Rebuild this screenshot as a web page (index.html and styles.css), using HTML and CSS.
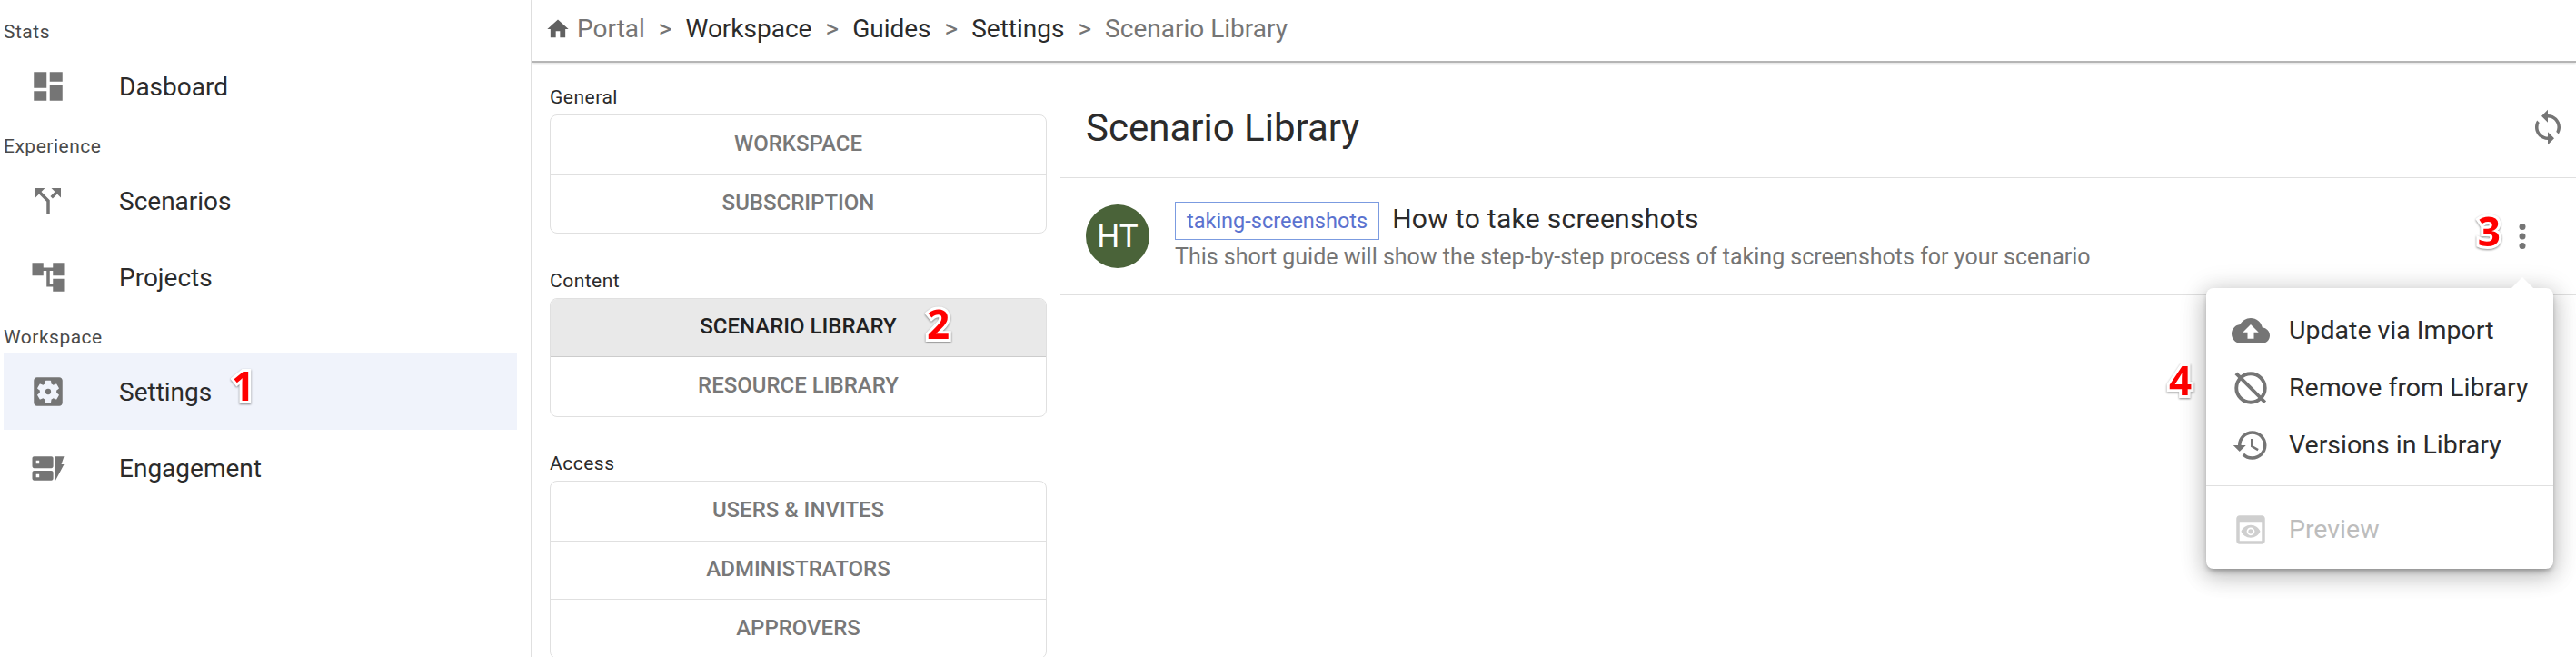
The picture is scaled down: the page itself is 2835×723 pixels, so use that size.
FILE: index.html
```html
<!DOCTYPE html>
<html lang="en">
<head>
    <meta charset="UTF-8">
    <meta name="viewport" content="width=device-width, initial-scale=1.0">
    <title>Scenario Library</title>
    <link rel="stylesheet" href="styles.css">
</head>
<body>
    <div class="app">
        <aside class="sidebar">
            <div class="side-label">Stats</div>
            <a class="side-item">
                <svg class="icon" viewBox="0 0 24 24"><path d="M3 13h8V3H3v10zm0 8h8v-6H3v6zm10 0h8V11h-8v10zm0-18v6h8V3h-8z"/></svg>
                <span>Dasboard</span>
            </a>
            <div class="side-label">Experience</div>
            <a class="side-item">
                <svg class="icon" viewBox="0 0 24 24"><path d="M14 4l2.29 2.29-2.88 2.88 1.42 1.42 2.88-2.88L20 10V4zm-4 0H4v6l2.29-2.29 4.71 4.7V20h2v-8.41l-5.29-5.3z"/></svg>
                <span>Scenarios</span>
            </a>
            <a class="side-item">
                <svg class="icon" viewBox="0 0 24 24"><path d="M22 11V3h-7v3H9V3H2v8h7V8h2v10h4v3h7v-8h-7v3h-2V8h2v3z"/></svg>
                <span>Projects</span>
            </a>
            <div class="side-label">Workspace</div>
            <a class="side-item active">
                <svg class="icon" viewBox="0 0 24 24"><path d="M19 3H5c-1.1 0-2 .9-2 2v14c0 1.1.9 2 2 2h14c1.1 0 2-.9 2-2V5c0-1.1-.9-2-2-2zm-1.75 9c0 .23-.02.46-.05.68l1.48 1.16c.13.11.17.3.08.45l-1.4 2.42c-.09.15-.27.21-.43.15l-1.74-.7c-.36.28-.76.51-1.18.69l-.26 1.85c-.03.17-.18.3-.35.3h-2.8c-.17 0-.32-.13-.35-.3l-.26-1.85c-.43-.18-.82-.41-1.18-.69l-1.74.7c-.16.06-.34 0-.43-.15l-1.4-2.42c-.09-.15-.05-.34.08-.45l1.48-1.16c-.03-.22-.05-.45-.05-.68 0-.23.02-.46.05-.68l-1.48-1.16c-.13-.11-.17-.3-.08-.45l1.4-2.42c.09-.15.27-.21.43-.15l1.74.7c.36-.28.76-.51 1.18-.69l.26-1.85c.03-.17.18-.3.35-.3h2.8c.17 0 .32.13.35.3l.26 1.85c.43.18.82.41 1.18.69l1.74-.7c.16-.06.34 0 .43.15l1.4 2.42c.09.15.05.34-.08.45l-1.48 1.16c.03.22.05.45.05.68z"/><circle cx="12" cy="12" r="1.8"/></svg>
                <span>Settings</span>
                <b class="mark mark-1">1</b>
            </a>
            <a class="side-item">
                <svg class="icon" viewBox="0 0 24 24"><path fill-rule="evenodd" d="M3.2 4.7h10.8c.7 0 1.2.5 1.2 1.2v5c0 .7-.5 1.2-1.2 1.2H3.200c-.7 0-1.200-.5-1.200-1.200v-5c0-.7.5-1.200 1.200-1.200zM4.400 7.300v2h2v-2zM3.200 13.700h10.800c.7 0 1.200.5 1.200 1.200v3.700c0 .7-.5 1.200-1.200 1.200H3.200c-.7 0-1.200-.5-1.200-1.200v-3.700c0-.7.5-1.200 1.200-1.200zM4.400 15.800v2h2v-2z"/><path d="M16.500 4.700H22l-1.700 5H22l-5.500 10.300z"/></svg>
                <span>Engagement</span>
            </a>
        </aside>

        <div class="page">
            <header class="crumbs">
                <svg class="home" viewBox="0 0 24 24"><path d="M10 20v-6h4v6h5v-8h3L12 3 2 12h3v8z"/></svg>
                <span class="crumb-muted">Portal</span>
                <span class="sep">&gt;</span>
                <span>Workspace</span>
                <span class="sep">&gt;</span>
                <span>Guides</span>
                <span class="sep">&gt;</span>
                <span>Settings</span>
                <span class="sep">&gt;</span>
                <span class="crumb-muted">Scenario Library</span>
            </header>

            <div class="page-body">
                <nav class="settings-nav">
                    <div class="nav-group">
                        <div class="nav-label">General</div>
                        <div class="nav-card">
                            <a class="nav-item">WORKSPACE</a>
                            <a class="nav-item">SUBSCRIPTION</a>
                        </div>
                    </div>
                    <div class="nav-group">
                        <div class="nav-label">Content</div>
                        <div class="nav-card">
                            <a class="nav-item selected">SCENARIO LIBRARY<b class="mark mark-2">2</b></a>
                            <a class="nav-item">RESOURCE LIBRARY</a>
                        </div>
                    </div>
                    <div class="nav-group">
                        <div class="nav-label">Access</div>
                        <div class="nav-card">
                            <a class="nav-item">USERS &amp; INVITES</a>
                            <a class="nav-item">ADMINISTRATORS</a>
                            <a class="nav-item">APPROVERS</a>
                        </div>
                    </div>
                </nav>

                <main class="library">
                    <div class="library-head">
                        <h1>Scenario Library</h1>
                        <svg class="icon" viewBox="0 0 24 24"><path d="M12 4V1L8 5l4 4V6c3.310 0 6 2.690 6 6 0 1.010-.25 1.970-.7 2.800l1.460 1.460C19.540 15.030 20 13.570 20 12c0-4.420-3.580-8-8-8zm0 14c-3.310 0-6-2.690-6-6 0-1.010.25-1.970.7-2.800L5.240 7.740C4.460 8.970 4 10.430 4 12c0 4.420 3.580 8 8 8v3l4-4-4-4v3z"/></svg>
                    </div>
                    <div class="guide">
                        <div class="avatar">HT</div>
                        <div class="guide-text">
                            <div class="guide-line">
                                <span class="tag">taking-screenshots</span>
                                <span class="guide-title">How to take screenshots</span>
                            </div>
                            <div class="guide-desc">This short guide will show the step-by-step process of taking screenshots for your scenario</div>
                        </div>
                        <b class="mark mark-3">3</b>
                        <svg class="icon" viewBox="0 0 24 24"><circle cx="12" cy="6" r="2"/><circle cx="12" cy="12" r="2"/><circle cx="12" cy="18" r="2"/></svg>
                    </div>
                </main>
            </div>
        </div>

        <b class="mark mark-4">4</b>

        <div class="menu">
            <a class="menu-item">
                <svg class="icon" viewBox="0 0 24 24"><path d="M19.350 10.040C18.670 6.590 15.640 4 12 4 9.110 4 6.600 5.640 5.350 8.040 2.340 8.360 0 10.910 0 14c0 3.310 2.690 6 6 6h13c2.760 0 5-2.240 5-5 0-2.640-2.050-4.780-4.650-4.960zM14 13v4h-4v-4H7l5-5 5 5h-3z"/></svg>
                <span>Update via Import</span>
            </a>
            <a class="menu-item">
                <svg class="icon" viewBox="0 0 24 24"><circle class="ring" cx="12" cy="12" r="9"/><path class="slash" d="M2.800 2.800L21 21"/></svg>
                <span>Remove from Library</span>
            </a>
            <a class="menu-item">
                <svg class="icon" viewBox="0 0 24 24"><path d="M13 3c-4.970 0-9 4.030-9 9H1l3.890 3.890.07.14L9 12H6c0-3.870 3.130-7 7-7s7 3.130 7 7-3.130 7-7 7c-1.930 0-3.680-.79-4.940-2.060l-1.420 1.420C8.270 19.990 10.510 21 13 21c4.970 0 9-4.030 9-9s-4.030-9-9-9zm-1 5v5l4.280 2.540.72-1.210-3.500-2.080V8H12z"/></svg>
                <span>Versions in Library</span>
            </a>
            <div class="menu-divider"></div>
            <a class="menu-item disabled">
                <svg class="icon" viewBox="0 0 24 24"><path d="M19 3H5c-1.110 0-2 .9-2 2v14c0 1.100.89 2 2 2h14c1.100 0 2-.9 2-2V5c0-1.100-.89-2-2-2zm0 16H5V7h14v12zM12 9c-2.730 0-5.060 1.660-6 4 .94 2.340 3.270 4 6 4s5.060-1.660 6-4c-.94-2.340-3.270-4-6-4zm0 6.500c-1.380 0-2.500-1.120-2.500-2.500s1.120-2.500 2.500-2.500 2.500 1.120 2.500 2.500-1.120 2.500-2.500 2.500z"/><circle cx="12" cy="13" r="1.500"/></svg>
                <span>Preview</span>
            </a>
        </div>
    </div>
</body>
</html>
```

FILE: styles.css
```css
body {
    margin: 0;
    font-family: Roboto, Arial, sans-serif;
    color: #2b2b2b;
    background-color: #fff;
    overflow: hidden;
}

.app {
    position: relative;
    display: flex;
    height: 723px;
    overflow: hidden;
}

.icon {
    flex: none;
    width: 42px;
    height: 42px;
    fill: #757575;
}

/* left sidebar */
.sidebar {
    flex: none;
    box-sizing: border-box;
    width: 586px;
    padding: 11px 15px 0 4px;
    border-right: 2px solid #e0e0e0;
}

.side-label {
    height: 42px;
    padding-top: 12px;
    box-sizing: border-box;
    font-size: 21px;
    letter-spacing: 0.5px;
    line-height: 24px;
    color: #4a4a4a;
}

.side-item {
    position: relative;
    display: flex;
    align-items: center;
    gap: 57px;
    height: 84px;
    padding-left: 28px;
    font-size: 28px;
}

.side-item.active {
    background-color: #f0f3fb;
}

/* red numbers stuck on the screenshot */
.mark {
    position: absolute;
    font-family: "Open Sans", sans-serif;
    font-size: 44px;
    line-height: 44px;
    font-weight: 700;
    color: #f00;
    -webkit-text-stroke: 6px #fff;
    paint-order: stroke fill;
    filter: drop-shadow(0 1px 1px rgba(0, 0, 0, 0.45));
}

.mark-1 { left: 251px; top: 13px; }
.mark-2 { left: 414px; top: 5px; }
.mark-3 { right: 83px; top: 36px; }
.mark-4 { left: 2387px; top: 396px; }

/* breadcrumb + content */
.page {
    flex: 1;
    display: flex;
    flex-direction: column;
    min-width: 0;
}

.crumbs {
    flex: none;
    display: flex;
    align-items: center;
    box-sizing: border-box;
    height: 69px;
    padding: 0 0 4px 14px;
    font-size: 28px;
    border-bottom: 2px solid #b5b5b5;
    box-shadow: 0 1px 2px rgba(0, 0, 0, 0.12);
}

.home {
    width: 28px;
    height: 28px;
    margin-right: 7px;
    fill: #616161;
}

.crumb-muted {
    color: #757575;
}

.sep {
    margin: 0 15px;
    color: #757575;
}

.page-body {
    flex: 1;
    display: flex;
    min-height: 0;
}

.settings-nav {
    flex: none;
    width: 547px;
    margin-left: 19px;
    padding-top: 26px;
}

.nav-group {
    margin-bottom: 39.500px;
}

.nav-label {
    font-size: 21px;
    letter-spacing: 0.5px;
    line-height: 24px;
    margin-bottom: 7px;
}

.nav-card {
    border: 1px solid #e0e0e0;
    border-radius: 8px;
}

.nav-item {
    position: relative;
    display: flex;
    align-items: center;
    justify-content: center;
    box-sizing: border-box;
    height: 64.500px;
    padding-bottom: 2px;
    font-size: 24px;
    font-weight: 500;
    color: #787878;
}

.nav-item + .nav-item {
    border-top: 1px solid #e0e0e0;
}

.nav-item.selected {
    background-color: #e9e9e9;
    color: #212121;
    border-bottom: 1px solid #ccc;
    border-radius: 7px 7px 0 0;
}

.nav-item.selected + .nav-item {
    border-top: 0;
}

/* library list */
.library {
    flex: 1;
    min-width: 0;
    margin-left: 15px;
}

.library-head {
    display: flex;
    align-items: center;
    justify-content: space-between;
    box-sizing: border-box;
    height: 127px;
    padding: 16px 10px 0 28px;
    border-bottom: 1px solid #e0e0e0;
}

h1 {
    margin: 0;
    font-size: 42px;
    font-weight: 400;
}

.guide {
    position: relative;
    display: flex;
    align-items: center;
    box-sizing: border-box;
    height: 129px;
    padding: 0 38px 0 28px;
    border-bottom: 1px solid #e0e0e0;
}

.avatar {
    flex: none;
    display: flex;
    align-items: center;
    justify-content: center;
    width: 70px;
    height: 70px;
    margin-right: 28px;
    border-radius: 50%;
    background-color: #4a6339;
    color: #fff;
    font-size: 35px;
}

.guide-text {
    flex: 1;
    min-width: 0;
    padding-top: 2px;
}

.guide-line {
    display: flex;
    align-items: center;
    gap: 14px;
}

.tag {
    box-sizing: border-box;
    height: 42px;
    padding: 0 12px;
    border: 1px solid #7b9be0;
    color: #5b72cf;
    font-size: 23.500px;
    line-height: 40px;
}

.guide-title {
    font-size: 30px;
    letter-spacing: 0.3px;
    margin-top: -4px;
}

.guide-desc {
    font-size: 25px;
    line-height: 37px;
    color: #757575;
}

/* popup menu */
.menu {
    position: absolute;
    top: 317px;
    right: 25px;
    box-sizing: border-box;
    width: 382px;
    height: 309px;
    padding-top: 15px;
    background-color: #fff;
    border-radius: 8px;
    box-shadow: 0 4px 6px -2px rgba(0, 0, 0, 0.35), 0 8px 24px 2px rgba(0, 0, 0, 0.16), 0 3px 28px 4px rgba(0, 0, 0, 0.12);
}

.menu::before {
    content: "";
    position: absolute;
    top: -12px;
    right: 22px;
    width: 24px;
    height: 24px;
    background-color: #fff;
    clip-path: polygon(50% 0, 100% 50%, 0 50%);
}

.menu-item {
    display: flex;
    align-items: center;
    gap: 21px;
    height: 63px;
    padding-left: 28px;
    font-size: 28.500px;
}

.menu-divider {
    margin: 13px 0 16px;
    border-top: 1px solid #e0e0e0;
}

.menu-item.disabled {
    color: #bdbdbd;
}

.menu-item.disabled .icon {
    fill: #cfcfcf;
}

.ring,
.slash {
    fill: none;
    stroke: #757575;
    stroke-width: 2.200;
}
```
